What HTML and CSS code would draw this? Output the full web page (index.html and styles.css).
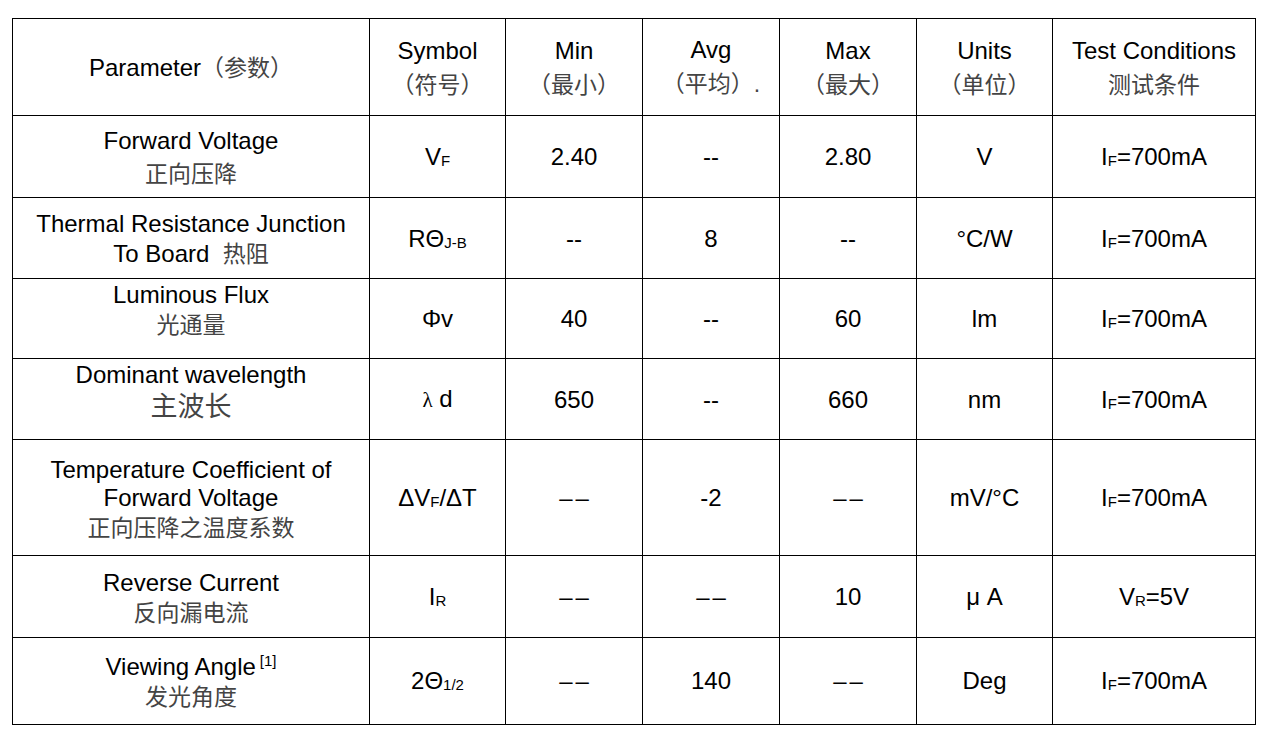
FILE: index.html
```
<!DOCTYPE html>
<html lang="zh">
<head>
<meta charset="utf-8">
<title>Electro-optical characteristics</title>
<link rel="stylesheet" href="styles.css">
</head>
<body>
<table class="spec">
  <colgroup>
    <col class="c-param">
    <col class="c-sym">
    <col class="c-num">
    <col class="c-num">
    <col class="c-num">
    <col class="c-unit">
    <col class="c-cond">
  </colgroup>
  <tbody>
    <tr class="r-head">
      <td><span class="en">Parameter</span><span class="zh">（参数）</span></td>
      <td><div class="en">Symbol</div><div class="zh hz">（符号）</div></td>
      <td><div class="en">Min</div><div class="zh hz">（最小）</div></td>
      <td><div class="en">Avg</div><div class="zh hz">（平均）<span class="en">.</span></div></td>
      <td><div class="en">Max</div><div class="zh hz">（最大）</div></td>
      <td><div class="en">Units</div><div class="zh hz">（单位）</div></td>
      <td><div class="en">Test Conditions</div><div class="zh hz">测试条件</div></td>
    </tr>
    <tr class="r-fv">
      <td><div class="en">Forward Voltage</div><div class="zh gap3">正向压降</div></td>
      <td>V<span class="sub">F</span></td>
      <td>2.40</td>
      <td>--</td>
      <td>2.80</td>
      <td>V</td>
      <td>I<span class="sub">F</span>=700mA</td>
    </tr>
    <tr class="r-th">
      <td><div class="en">Thermal Resistance Junction</div><div class="en">To Board&nbsp; <span class="zh">热阻</span></div></td>
      <td>RΘ<span class="sub">J-B</span></td>
      <td>--</td>
      <td>8</td>
      <td>--</td>
      <td>°C/W</td>
      <td>I<span class="sub">F</span>=700mA</td>
    </tr>
    <tr class="r-lf">
      <td class="up"><div class="en">Luminous Flux</div><div class="zh">光通量</div></td>
      <td>Φv</td>
      <td>40</td>
      <td>--</td>
      <td>60</td>
      <td>lm</td>
      <td>I<span class="sub">F</span>=700mA</td>
    </tr>
    <tr class="r-dw">
      <td class="up"><div class="en">Dominant wavelength</div><div class="zh big">主波长</div></td>
      <td><span class="lam">λ</span> d</td>
      <td>650</td>
      <td>--</td>
      <td>660</td>
      <td>nm</td>
      <td>I<span class="sub">F</span>=700mA</td>
    </tr>
    <tr class="r-tc">
      <td><div class="en">Temperature Coefficient of</div><div class="en">Forward Voltage</div><div class="zh">正向压降之温度系数</div></td>
      <td>ΔV<span class="sub">F</span>/ΔT</td>
      <td><span class="dd">––</span></td>
      <td>-2</td>
      <td><span class="dd">––</span></td>
      <td>mV/°C</td>
      <td>I<span class="sub">F</span>=700mA</td>
    </tr>
    <tr class="r-rc">
      <td><div class="en">Reverse Current</div><div class="zh">反向漏电流</div></td>
      <td>I<span class="sub">R</span></td>
      <td><span class="dd">––</span></td>
      <td><span class="dd">––</span></td>
      <td>10</td>
      <td>μ A</td>
      <td>V<span class="sub">R</span>=5V</td>
    </tr>
    <tr class="r-va">
      <td><div class="en">Viewing Angle<sup class="note">[1]</sup></div><div class="zh">发光角度</div></td>
      <td>2Θ<span class="sub">1/2</span></td>
      <td><span class="dd">––</span></td>
      <td>140</td>
      <td><span class="dd">––</span></td>
      <td>Deg</td>
      <td>I<span class="sub">F</span>=700mA</td>
    </tr>
  </tbody>
</table>
</body>
</html>
```

FILE: styles.css
```
html, body {
  margin: 0;
  padding: 0;
  background: #ffffff;
}

body {
  padding: 18px 0 0 12px;
  font-family: "Liberation Sans", Arial, sans-serif;
  color: #000;
}

.spec {
  border-collapse: collapse;
  table-layout: fixed;
  width: 1243px;
}

.c-param { width: 357px; }
.c-sym { width: 136px; }
.c-num { width: 137px; }
.c-unit { width: 136px; }
.c-cond { width: 203px; }

.spec td {
  border: 1px solid #000;
  padding: 0;
  text-align: center;
  vertical-align: middle;
  font-size: 24px;
  line-height: 29px;
  white-space: nowrap;
}

.r-head { height: 97px; }
.r-fv { height: 82px; }
.r-th { height: 81px; }
.r-lf { height: 80px; }
.r-dw { height: 81px; }
.r-tc { height: 116px; }
.r-rc { height: 82px; }
.r-va { height: 87px; }

.en {
  font-family: "Liberation Sans", Arial, sans-serif;
}

.zh {
  font-family: "Noto Sans CJK SC", "Noto Sans CJK TC", sans-serif;
  font-size: 23px;
  color: #444;
}

.hz {
  margin-top: 4px;
}

.gap3 {
  margin-top: 3px;
}

.r-tc td {
  line-height: 28px;
}

.r-rc td,
.r-va td {
  line-height: 28px;
}

.big {
  font-size: 27px;
  line-height: 31px;
}

.spec td.up {
  padding-bottom: 20px;
}

.r-dw td.up {
  padding-bottom: 18px;
}

.dd {
  letter-spacing: 3px;
  margin-right: -3px;
}

.sub {
  font-size: 15px;
  vertical-align: -1px;
  line-height: 1;
}

.lam {
  font-family: "Liberation Serif", "DejaVu Serif", serif;
  font-size: 21px;
}

.note {
  font-size: 15px;
  vertical-align: 9px;
  line-height: 1;
  margin-left: 4px;
}
```
